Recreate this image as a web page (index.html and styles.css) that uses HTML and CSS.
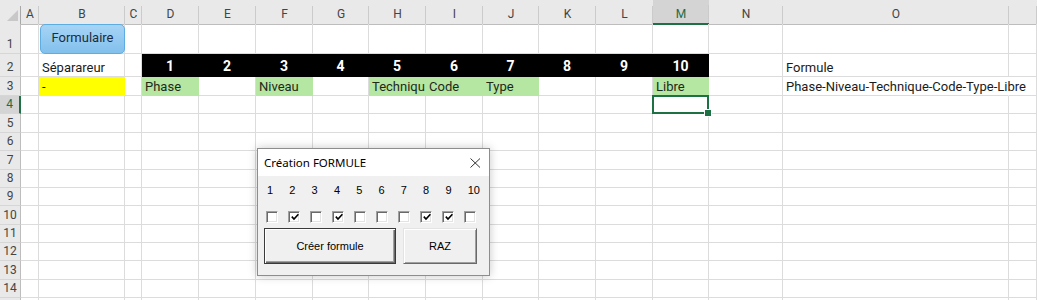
FILE: index.html
```html
<!DOCTYPE html>
<html lang="fr">
<head>
<meta charset="utf-8">
<title>Création FORMULE</title>
<link rel="stylesheet" href="styles.css">
</head>
<body>
<div class="sheet">
  <div class="row hdr">
    <div class="corner"><svg width="21" height="24" viewBox="0 0 21 24"><polygon points="18,10 18,21 7,21" fill="#c8c8c8"/></svg></div>
    <div class="ch">A</div><div class="ch">B</div><div class="ch">C</div><div class="ch">D</div><div class="ch">E</div><div class="ch">F</div><div class="ch">G</div><div class="ch">H</div><div class="ch">I</div><div class="ch">J</div><div class="ch">K</div><div class="ch">L</div><div class="ch sel">M</div><div class="ch">N</div><div class="ch">O</div><div class="ch"></div>
  </div>
  <div class="row r1">
    <div class="rh">1</div><div></div><div></div><div></div><div></div><div></div><div></div><div></div><div></div><div></div><div></div><div></div><div></div><div></div><div></div><div></div><div></div>
  </div>
  <div class="row r2">
    <div class="rh">2</div><div></div><div>Séparareur</div><div></div>
    <div class="blk">1</div><div class="blk">2</div><div class="blk">3</div><div class="blk">4</div><div class="blk">5</div><div class="blk">6</div><div class="blk">7</div><div class="blk">8</div><div class="blk">9</div><div class="blk">10</div>
    <div></div><div>Formule</div><div></div>
  </div>
  <div class="row r3">
    <div class="rh">3</div><div></div><div class="yel">-</div><div></div>
    <div class="grn">Phase</div><div></div><div class="grn">Niveau</div><div></div><div class="grn clip">Technique</div><div class="grn">Code</div><div class="grn">Type</div><div></div><div></div><div class="grn">Libre</div>
    <div></div><div class="over">Phase-Niveau-Technique-Code-Type-Libre</div><div></div>
  </div>
  <div class="row r4">
    <div class="rh sel">4</div><div></div><div></div><div></div><div></div><div></div><div></div><div></div><div></div><div></div><div></div><div></div><div></div><div class="active"></div><div></div><div></div><div></div>
  </div>
  <div class="row r19"><div class="rh">5</div><div></div><div></div><div></div><div></div><div></div><div></div><div></div><div></div><div></div><div></div><div></div><div></div><div></div><div></div><div></div><div></div></div>
  <div class="row r18"><div class="rh">6</div><div></div><div></div><div></div><div></div><div></div><div></div><div></div><div></div><div></div><div></div><div></div><div></div><div></div><div></div><div></div><div></div></div>
  <div class="row r19"><div class="rh">7</div><div></div><div></div><div></div><div></div><div></div><div></div><div></div><div></div><div></div><div></div><div></div><div></div><div></div><div></div><div></div><div></div></div>
  <div class="row r18"><div class="rh">8</div><div></div><div></div><div></div><div></div><div></div><div></div><div></div><div></div><div></div><div></div><div></div><div></div><div></div><div></div><div></div><div></div></div>
  <div class="row r18"><div class="rh">9</div><div></div><div></div><div></div><div></div><div></div><div></div><div></div><div></div><div></div><div></div><div></div><div></div><div></div><div></div><div></div><div></div></div>
  <div class="row r19"><div class="rh">10</div><div></div><div></div><div></div><div></div><div></div><div></div><div></div><div></div><div></div><div></div><div></div><div></div><div></div><div></div><div></div><div></div></div>
  <div class="row r18"><div class="rh">11</div><div></div><div></div><div></div><div></div><div></div><div></div><div></div><div></div><div></div><div></div><div></div><div></div><div></div><div></div><div></div><div></div></div>
  <div class="row r18"><div class="rh">12</div><div></div><div></div><div></div><div></div><div></div><div></div><div></div><div></div><div></div><div></div><div></div><div></div><div></div><div></div><div></div><div></div></div>
  <div class="row r19"><div class="rh">13</div><div></div><div></div><div></div><div></div><div></div><div></div><div></div><div></div><div></div><div></div><div></div><div></div><div></div><div></div><div></div><div></div></div>
  <div class="row r18"><div class="rh">14</div><div></div><div></div><div></div><div></div><div></div><div></div><div></div><div></div><div></div><div></div><div></div><div></div><div></div><div></div><div></div><div></div></div>
  <div class="row r18"><div class="rh">15</div><div></div><div></div><div></div><div></div><div></div><div></div><div></div><div></div><div></div><div></div><div></div><div></div><div></div><div></div><div></div><div></div></div>

  <div class="shape-btn">Formulaire</div>

  <div class="dlg">
    <div class="dlg-title">
      <span>Création FORMULE</span>
      <svg class="close" width="11" height="10" viewBox="0 0 11 10"><path d="M0.5 0.5 L10 9.5 M10 0.5 L0.5 9.5" stroke="#333" stroke-width="1" fill="none"/></svg>
    </div>
    <div class="dlg-body">
      <div class="labels"><span>1</span><span>2</span><span>3</span><span>4</span><span>5</span><span>6</span><span>7</span><span>8</span><span>9</span><span>10</span></div>
      <div class="checks">
        <span class="cb"></span>
        <span class="cb"><svg width="8" height="8" viewBox="0 0 8 8"><path d="M0.8 3.6 L3 6 L7.4 1.2" stroke="#000" stroke-width="1.6" fill="none"/></svg></span>
        <span class="cb"></span>
        <span class="cb"><svg width="8" height="8" viewBox="0 0 8 8"><path d="M0.8 3.6 L3 6 L7.4 1.2" stroke="#000" stroke-width="1.6" fill="none"/></svg></span>
        <span class="cb"></span>
        <span class="cb"></span>
        <span class="cb"></span>
        <span class="cb"><svg width="8" height="8" viewBox="0 0 8 8"><path d="M0.8 3.6 L3 6 L7.4 1.2" stroke="#000" stroke-width="1.6" fill="none"/></svg></span>
        <span class="cb"><svg width="8" height="8" viewBox="0 0 8 8"><path d="M0.8 3.6 L3 6 L7.4 1.2" stroke="#000" stroke-width="1.6" fill="none"/></svg></span>
        <span class="cb"></span>
      </div>
      <div class="btns">
        <button class="btn def">Créer formule</button>
        <button class="btn raz">RAZ</button>
      </div>
    </div>
  </div>
</div>
</body>
</html>
```

FILE: styles.css
```css
* { box-sizing: border-box; margin: 0; padding: 0; }
body { margin: 0; background: #fff; font-family: Roboto, "Liberation Sans", sans-serif; }

.sheet { position: relative; width: 1037px; height: 300px; overflow: hidden; background: #fff; }

.row {
  display: grid;
  grid-template-columns: 21px 18px 86px 17px 57px 57px 57px 56px 57px 57px 56px 57px 57px 56px 74px 226px 28px;
}
.row > div {
  border-right: 1px solid #dcdcdc;
  border-bottom: 1px solid #dcdcdc;
  font-size: 13px;
  line-height: 15px;
  color: #1b1b1b;
  padding: 0 3px 1px;
  display: flex;
  align-items: flex-end;
  white-space: nowrap;
  position: relative;
}

.hdr { height: 24px; }
.r1 { height: 30px; }
.r2 { height: 23px; }
.r3 { height: 19px; }
.r4 { height: 18px; }
.r18 { height: 18px; }
.r19 { height: 19px; }

.hdr > div {
  background-color: #e9e9e9;
  background-image: linear-gradient(#cbcbcb, #cbcbcb);
  background-size: 1px 18px;
  background-position: right bottom;
  background-repeat: no-repeat;
  border-right: none;
  border-bottom: 1px solid #bdbdbd;
  justify-content: center;
  align-items: center;
  padding: 5px 0 0;
  font-size: 12px;
  color: #444;
}
.hdr > .corner { padding: 0; align-items: stretch; justify-content: stretch; background-image: linear-gradient(#a8a8a8, #a8a8a8); }
.hdr > .corner svg { display: block; }
.hdr > .ch.sel {
  background-color: #d4d4d4;
  border-bottom: 2px solid #1e7145;
  color: #1f6b47;
}

.row > .rh {
  background: #e9e9e9;
  border-right: 1px solid #bdbdbd;
  border-bottom-color: #d6d6d6;
  justify-content: center;
  padding: 0 0 2px;
  font-size: 12px;
  line-height: 14px;
  color: #444;
}
.row > .rh.sel {
  background: #d4d4d4;
  border-right: 2px solid #1e7145;
  color: #1f6b47;
}

.row > .blk {
  background: #000;
  border-color: #000;
  color: #fff;
  font-weight: 700;
  font-size: 14px;
  line-height: 16px;
  justify-content: center;
  padding-bottom: 2px;
}
.row > .yel { background: #ffff00; border-color: #ffff00; }
.row > .grn { background: #b5e6a2; border-color: #b5e6a2; color: #1d2a1a; }
.row > .clip { overflow: hidden; }
.row > .over { border-right-color: transparent; }

.row > .active::after {
  content: "";
  position: absolute;
  left: -1px; top: -1px; right: -1px; bottom: -1px;
  border: 2px solid #1e7145;
}
.row > .active::before {
  content: "";
  position: absolute;
  right: -4px; bottom: -4px;
  width: 6px; height: 6px;
  background: #1e7145;
  border: 1px solid #fff;
  z-index: 2;
}

.shape-btn {
  position: absolute;
  left: 40px; top: 24px;
  width: 85px; height: 30px;
  border: 1px solid #5eade2;
  border-radius: 5px;
  background: linear-gradient(#a6d4f6, #82c0ec);
  color: #1d2b3a;
  font-size: 13px;
  line-height: 15px;
  text-align: center;
  padding-top: 5px;
}

.dlg {
  position: absolute;
  left: 257px; top: 148px;
  width: 233px; height: 128px;
  border: 1px solid #8d8d8d;
  background: #f0f0f0;
  box-shadow: 0 0 9px rgba(0, 0, 0, 0.22);
  display: flex;
  flex-direction: column;
}
.dlg-title {
  height: 27px;
  background: #fff;
  display: flex;
  align-items: center;
  justify-content: space-between;
  padding: 0 8px 0 6px;
  font-family: "Noto Sans", "Liberation Sans", sans-serif;
  font-size: 11.5px;
  color: #000;
}
.close { display: block; margin-top: 1px; }
.dlg-body {
  flex: 1;
  padding: 8px 0 0 8px;
  font-family: "Liberation Sans", Arial, sans-serif;
  font-size: 11px;
  color: #000;
}
.labels {
  display: grid;
  grid-template-columns: repeat(10, 22.3px);
  line-height: 13px;
  padding-left: 1px;
}
.checks {
  display: grid;
  grid-template-columns: repeat(10, 22px);
  margin-top: 14px;
  height: 12px;
}
.cb {
  width: 12px; height: 12px;
  background: #fff;
  border: 1px solid;
  border-color: #a0a0a0 #fff #fff #a0a0a0;
  box-shadow: inset 1px 1px 0 #6a6a6a, inset -1px -1px 0 #e3e3e3;
  display: flex;
  align-items: center;
  justify-content: center;
}
.cb svg { display: block; margin: 0 0 0 1px; }
.btns {
  display: flex;
  gap: 7px;
  margin-top: 5px;
  margin-left: -2px;
}
.btn {
  height: 36px;
  background: #f0f0f0;
  font-family: "Liberation Sans", Arial, sans-serif;
  font-size: 11px;
  color: #000;
  border: 1px solid;
}
.btn.def {
  width: 132px;
  border-color: #3a3a3a;
  box-shadow: inset 1px 1px 0 #fff, inset -1px -1px 0 #696969, inset -2px -2px 0 #a0a0a0;
}
.btn.raz {
  width: 74px;
  border-color: #e3e3e3 #696969 #696969 #e3e3e3;
  box-shadow: inset 1px 1px 0 #fff, inset -1px -1px 0 #a0a0a0;
}
```
